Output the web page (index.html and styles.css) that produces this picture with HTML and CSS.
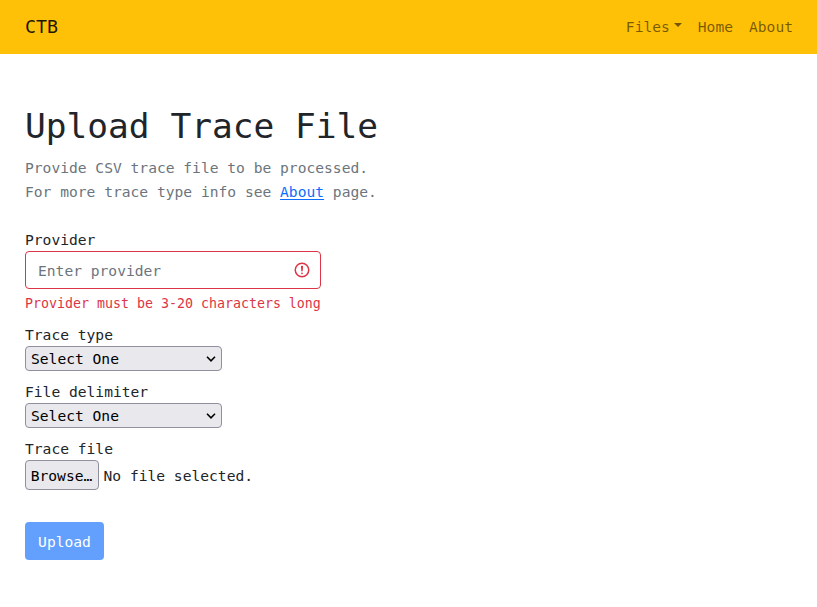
FILE: index.html
```
<!DOCTYPE html>
<html lang="en">
<head>
<meta charset="utf-8">
<title>Upload Trace File</title>
<link rel="stylesheet" href="styles.css">
</head>
<body>
<nav class="navbar">
  <a class="brand" href="#">CTB</a>
  <div class="nav-links">
    <a class="nav-link dropdown" href="#">Files</a>
    <a class="nav-link" href="#">Home</a>
    <a class="nav-link" href="#">About</a>
  </div>
</nav>
<main class="content">
  <h1>Upload Trace File</h1>
  <p class="lead">Provide CSV trace file to be processed.<br>For more trace type info see <a href="#">About</a> page.</p>
  <form>
    <div class="group">
      <label for="provider">Provider</label>
      <div class="control">
        <input id="provider" type="text" placeholder="Enter provider">
        <svg class="alert" viewBox="0 0 12 12" width="18" height="18" fill="none" stroke="#dc3545"><circle cx="6" cy="6" r="4.5"/><path stroke-linejoin="round" d="M5.8 3.6h.4L6 6.5z"/><circle cx="6" cy="8.2" r=".6" fill="#dc3545" stroke="none"/></svg>
      </div>
      <div class="feedback">Provider must be 3-20 characters long</div>
    </div>
    <div class="group">
      <label for="type">Trace type</label>
      <div class="select">
        <select id="type"><option>Select One</option></select>
        <svg class="chevron" viewBox="0 0 10 6" width="10" height="6"><path d="M1 .8 5 4.8 9 .8" fill="none" stroke="#000" stroke-width="1.6"/></svg>
      </div>
    </div>
    <div class="group">
      <label for="delimiter">File delimiter</label>
      <div class="select">
        <select id="delimiter"><option>Select One</option></select>
        <svg class="chevron" viewBox="0 0 10 6" width="10" height="6"><path d="M1 .8 5 4.8 9 .8" fill="none" stroke="#000" stroke-width="1.6"/></svg>
      </div>
    </div>
    <div class="group">
      <label>Trace file</label>
      <div class="file">
        <button class="browse" type="button">Browse…</button>
        <span class="filename">No file selected.</span>
      </div>
    </div>
    <button class="upload" type="submit" disabled>Upload</button>
  </form>
</main>
</body>
</html>
```
FILE: styles.css
```
* { box-sizing: border-box; }
body {
  margin: 0;
  background: #fff;
  color: #212529;
  font: 14.61px/24px "DejaVu Sans Mono", monospace;
}
input, select, button { font: inherit; margin: 0; }
.navbar {
  display: flex;
  align-items: center;
  justify-content: space-between;
  height: 54px;
  padding: 0 24px 0 25px;
  background: #ffc107;
}
.navbar a { text-decoration: none; }
.brand { font-size: 18.27px; color: rgba(0, 0, 0, .9); }
.nav-links { display: flex; gap: 16px; }
.nav-link { color: rgba(0, 0, 0, .55); }
.dropdown::after {
  content: "";
  display: inline-block;
  margin-left: 4px;
  vertical-align: 5px;
  border: 4px solid transparent;
  border-top-color: currentColor;
  border-bottom: 0;
}
.content { padding: 50px 25px 0; }
h1 { margin: 0 0 7px; font-size: 34.5px; line-height: 45px; font-weight: 400; }
.lead { margin: 0 0 24px; color: #6c757d; }
.lead a { color: #0d6efd; text-underline-offset: 2px; text-decoration-thickness: 1px; }
.group { margin-bottom: 8px; }
label { display: block; height: 23px; }
.control { position: relative; width: 296px; }
.control input {
  display: block;
  width: 100%;
  height: 38px;
  padding: 0 36px 0 12px;
  border: 1px solid #dc3545;
  border-radius: 4px;
  outline: none;
}
input::placeholder { color: #6c757d; opacity: 1; }
.alert { position: absolute; right: 10px; top: 10px; }
.feedback { margin-top: 4px; height: 22px; line-height: 22px; font-size: 13.29px; color: #dc3545; }
.select { position: relative; width: 197px; }
select {
  display: block;
  appearance: none;
  width: 100%;
  height: 25px;
  padding: 0 5px;
  line-height: 23px;
  color: #000;
  background: #e9e9ed;
  border: 1px solid #8f8f9d;
  border-radius: 4px;
}
.chevron { position: absolute; right: 6px; top: 10px; }
.group:has(.select) { margin-bottom: 9px; }
.file { display: flex; align-items: center; gap: 4px; height: 30px; }
.filename { padding: 2px 0 0 .5px; }
.browse {
  width: 74px;
  height: 30px;
  padding: 2px 1px 0 0;
  color: #000;
  background: #e9e9ed;
  border: 1px solid #8f8f9d;
  border-radius: 4px;
}
.upload {
  display: block;
  margin-top: 32px;
  width: 79px;
  height: 38px;
  padding: 2px 0 0;
  color: #fff;
  background: #63a0fe;
  border: 0;
  border-radius: 4px;
}
```
